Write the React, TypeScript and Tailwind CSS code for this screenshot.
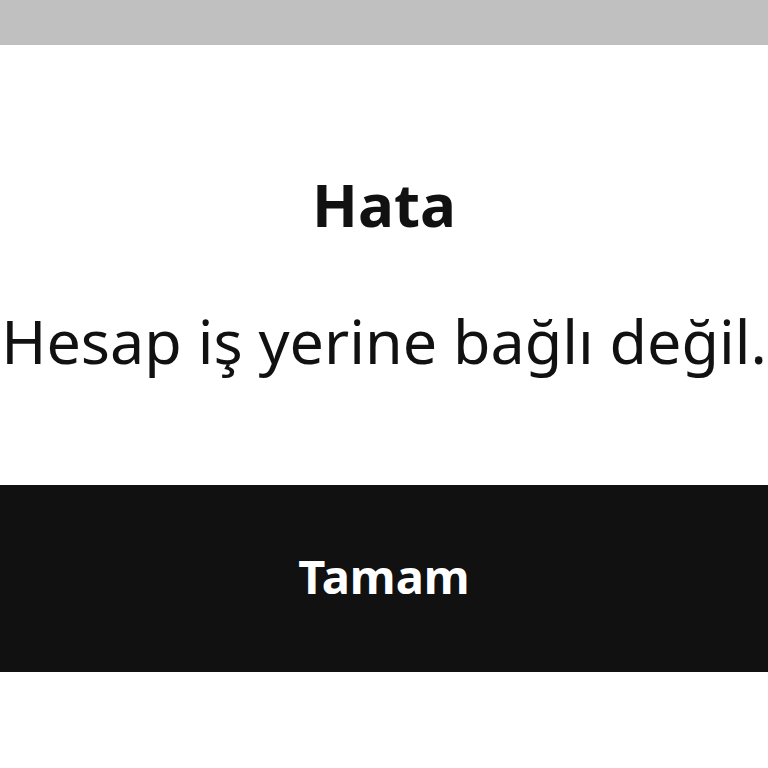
import React from "react";

export default function App() {
  return (
    <div className="w-[768px] h-[768px] bg-white flex flex-col overflow-hidden" style={{ fontFamily: '"Noto Sans", sans-serif' }}>
      <div className="h-[45px] bg-[#c0c0c0] shrink-0" />
      <div className="mt-[129px] text-center text-[60px] leading-none font-bold text-[#111111]">Hata</div>
      <div className="mt-[76px] text-center text-[61px] leading-none text-[#111111] whitespace-nowrap">Hesap iş yerine bağlı değil.</div>
      <button className="mt-[114px] h-[187px] w-full bg-[#111111] text-white text-[47px] leading-none font-bold flex items-center justify-center shrink-0 pb-[4px]">
        Tamam
      </button>
    </div>
  );
}
